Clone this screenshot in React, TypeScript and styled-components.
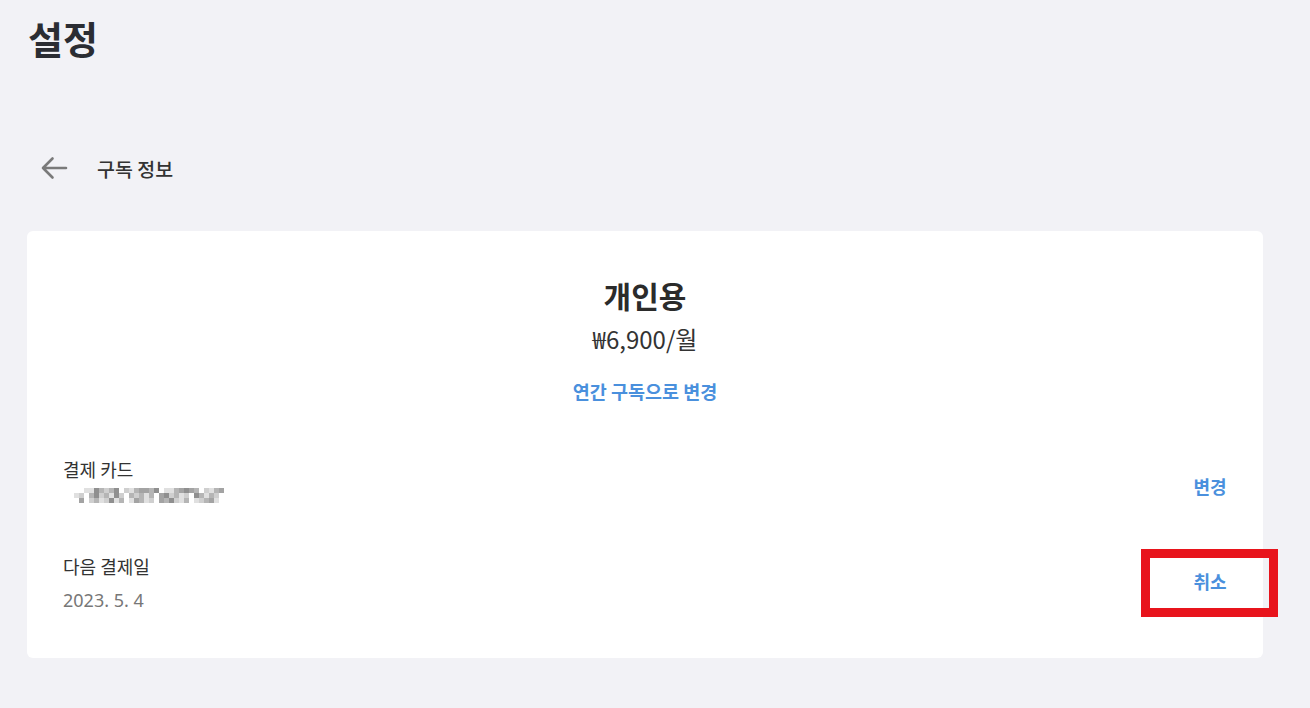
import * as React from 'react';
import styled, { createGlobalStyle } from 'styled-components';

const GlobalStyle = createGlobalStyle`
  html, body {
    margin: 0;
    padding: 0;
    background: #f2f2f6;
    font-family: "Noto Sans", "Noto Sans CJK KR", sans-serif;
    color: #333;
  }
`;

const Page = styled.div`
  width: 1310px;
  height: 708px;
  box-sizing: border-box;
  padding: 14px 47px 0 27px;
  overflow: hidden;
`;

const Title = styled.h1`
  margin: 0 0 0 1px;
  font-family: "Noto Sans CJK KR", sans-serif;
  font-size: 38px;
  font-weight: 700;
  line-height: 48px;
  color: #2b2d33;
`;

const Header = styled.div`
  display: flex;
  align-items: center;
  margin-top: 88px;
  height: 36px;
`;

const BackButton = styled.button`
  display: flex;
  align-items: center;
  justify-content: center;
  width: 50px;
  height: 36px;
  padding: 0;
  margin-left: 2px;
  border: none;
  background: none;
  cursor: pointer;
`;

const HeaderText = styled.span`
  margin-left: 18px;
  font-family: "Noto Sans CJK KR", sans-serif;
  font-size: 19.5px;
  font-weight: 500;
  color: #333;
`;

const Card = styled.div`
  margin-top: 45px;
  height: 427px;
  box-sizing: border-box;
  background: #fff;
  border-radius: 6px;
  padding: 40px 18px 0 18px;
`;

const Plan = styled.div`
  display: flex;
  flex-direction: column;
  align-items: center;
`;

const PlanName = styled.div`
  font-family: "Noto Sans CJK KR", sans-serif;
  font-size: 30px;
  font-weight: 700;
  line-height: 48px;
  color: #2b2b2b;
`;

const Price = styled.div`
  font-family: "Noto Sans CJK KR", sans-serif;
  font-size: 24px;
  font-weight: 400;
  line-height: 40px;
  color: #333;
`;

const LinkButton = styled.button`
  margin-top: 19px;
  border: none;
  background: none;
  padding: 0;
  font-family: "Noto Sans CJK KR", sans-serif;
  font-size: 18.5px;
  font-weight: 700;
  line-height: 26px;
  color: #4a90dd;
  cursor: pointer;
`;

const Row = styled.div<{ $top: number }>`
  display: flex;
  align-items: center;
  justify-content: space-between;
  margin-top: ${(p) => p.$top}px;
  padding-left: 18px;
`;

const RowInfo = styled.div`
  display: flex;
  flex-direction: column;
`;

const Label = styled.div`
  font-family: "Noto Sans CJK KR", sans-serif;
  font-size: 18px;
  line-height: 26px;
  color: #333;
`;

const Value = styled.div`
  margin-top: 9px;
  font-family: "Noto Sans", "Noto Sans CJK KR", sans-serif;
  font-size: 18px;
  line-height: 24px;
  color: #777;
`;

const Masked = styled.svg`
  display: block;
  margin: 6px 0 13px 6px;
`;

const ActionButton = styled.button<{ $marked?: boolean }>`
  position: relative;
  width: 70px;
  height: 36px;
  border: none;
  background: #fff;
  padding: 0;
  font-family: "Noto Sans CJK KR", sans-serif;
  font-size: 18px;
  font-weight: 700;
  color: #4a90dd;
  cursor: pointer;

  ${(p) =>
    p.$marked &&
    `
    margin-top: -4px;
    &::after {
      content: '';
      position: absolute;
      left: -34px;
      top: -14px;
      width: 137px;
      height: 68px;
      box-sizing: border-box;
      border: 9px solid #e8141c;
    }
  `}
`;

const mosaic = [
  '...ddabcba.cdbeeba.ddbeaeb.cdbe.',
  '.dc.bacbdac.bcbdb.eacbdc.abdbc..',
  '..e.cbdcadb.debdc.ebacdb.dcbed.',
];
const shades: Record<string, string> = {
  a: '#8f8f8f',
  b: '#b5b5b5',
  c: '#cfcfcf',
  d: '#e0e0e0',
  e: '#a3a3a3',
};

function MaskedCard() {
  const cell = 5;
  return (
    <Masked width={155} height={15} viewBox="0 0 155 15">
      {mosaic.map((row, r) =>
        row.split('').map((ch, c) =>
          shades[ch] ? (
            <rect key={`${r}-${c}`} x={c * cell} y={r * cell} width={cell} height={cell} fill={shades[ch]} />
          ) : null
        )
      )}
    </Masked>
  );
}

export default function App() {
  return (
    <>
      <GlobalStyle />
      <Page>
        <Title>설정</Title>
        <Header>
          <BackButton aria-label="뒤로">
            <svg width="28" height="24" viewBox="0 0 28 24" fill="none">
              <path d="M26 12H3M12.5 2.5L3 12l9.5 9.5" stroke="#7a7a7a" strokeWidth="2.6" strokeLinecap="round" strokeLinejoin="round" />
            </svg>
          </BackButton>
          <HeaderText>구독 정보</HeaderText>
        </Header>
        <Card>
          <Plan>
            <PlanName>개인용</PlanName>
            <Price>₩6,900/월</Price>
            <LinkButton>연간 구독으로 변경</LinkButton>
          </Plan>
          <Row $top={52}>
            <RowInfo>
              <Label>결제 카드</Label>
              <MaskedCard />
            </RowInfo>
            <ActionButton>변경</ActionButton>
          </Row>
          <Row $top={37}>
            <RowInfo>
              <Label>다음 결제일</Label>
              <Value>2023. 5. 4</Value>
            </RowInfo>
            <ActionButton $marked>취소</ActionButton>
          </Row>
        </Card>
      </Page>
    </>
  );
}
